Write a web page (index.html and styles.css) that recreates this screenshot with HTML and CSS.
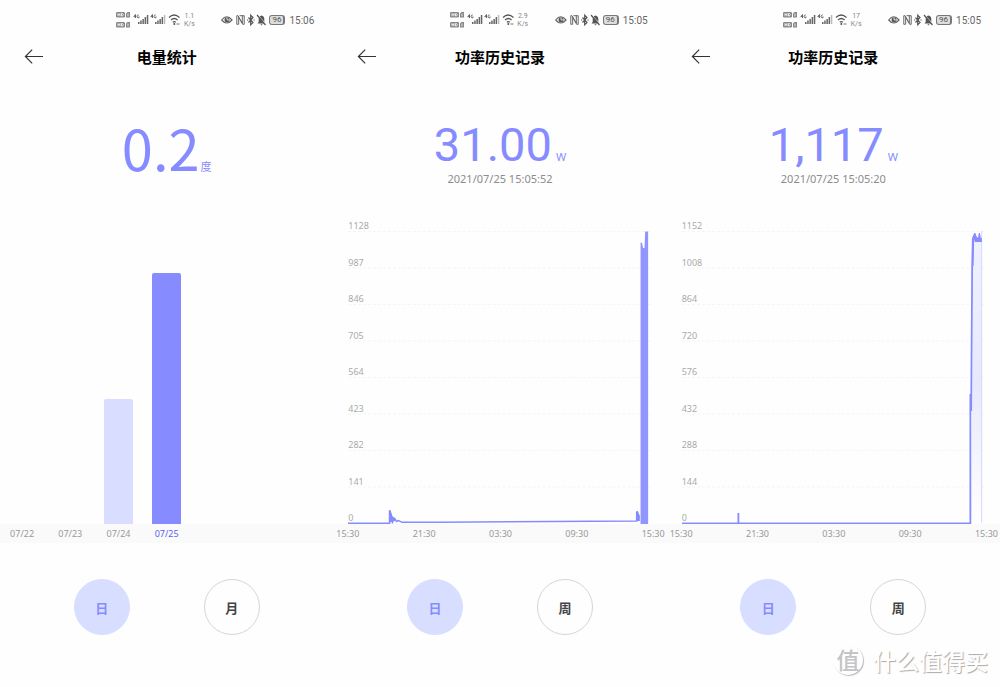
FILE: index.html
```html
<!DOCTYPE html>
<html lang="zh-CN">
<head>
<meta charset="utf-8">
<meta name="viewport" content="width=device-width, initial-scale=1">
<title>电量统计</title>
<link rel="stylesheet" href="styles.css">
</head>
<body>
<svg class="sprite" aria-hidden="true">
  <symbol id="network" viewBox="0 0 65 18">
    <g fill="#888">
      <rect x="0" y="1" width="9" height="5.500" rx="1.200"/><rect x="0" y="11" width="9" height="5.500" rx="1.200"/>
      <path d="M10 2.500L11.500 1H14v5.500h-4zM10 12.500l1.500-1.500H14v5.500h-4z"/>
    </g>
    <path d="M2 2.200v3M4 2.200v3M2 3.700h2M5.500 2.500h1l.8 1.200-.8 1.300h-1zM12 2.500v2.800M2 12.200v3M4 12.200v3M2 13.700h2M5.500 12.500h1l.8 1.200-.8 1.300h-1zM12 12.500v2.800" fill="none" stroke="#fff" stroke-width=".8"/>
    <g fill="none" stroke="#666" stroke-width="1">
      <path d="M19.500 7V3.500L17.800 5.700h2.300M22.800 4.200c-1.600-1.400-2.600 2.600-.6 2.600h.8V5.500M36.500 7V3.500L34.800 5.700h2.300M39.800 4.200c-1.600-1.400-2.600 2.600-.6 2.600h.8V5.500"/>
    </g>
    <path d="M22 11h1.500v2H22zM24.200 9.500h1.500V13h-1.500zM26.400 8h1.500v5h-1.500zM28.600 6h1.500v7h-1.500zM30.800 4h1.500v9h-1.500zM39 11h1.500v2H39zM41.200 9.500h1.500V13h-1.500zM43.400 8h1.500v5h-1.500zM45.600 6h1.500v7h-1.500z" fill="#666"/>
    <path d="M47.800 4h1.500v9h-1.500z" fill="#bbb"/>
    <g fill="none" stroke="#555" stroke-width="1.200"><path d="M53 6.500q5-5 10.500 0M55 9q3.300-3 6.600 0M56.800 11.300q1.500-1.300 3 0"/></g>
    <circle cx="58.300" cy="13" r="1" fill="#555"/><path d="M60.500 13h3" stroke="#777"/>
  </symbol>
  <symbol id="modes" viewBox="0 0 45 14">
    <path d="M.7 7q5-6.500 10.300 0-5.300 6-10.300 0z" fill="none" stroke="#666" stroke-width="1.200"/>
    <circle cx="6" cy="6.800" r="2.500" fill="#555"/><path d="M6 4.500v2.400h2" stroke="#fff" stroke-width=".8" fill="none"/>
    <path d="M17.500 11.300h-1.700V2.700h1.200l4.300 7.600V2.700M18.500 2.700h4.700v8.600h-1.500l-4-7v7" fill="none" stroke="#666" stroke-width="1"/>
    <path d="M27.500 4.500l4.500 5-2.300 2.300V2.200L32 4.500l-4.500 5M26 7h1.200M32.500 7h1.200" fill="none" stroke="#555" stroke-width="1.200"/>
    <path d="M36.500 10.500l1.200-1.500V6q0-3 2.800-3.500Q43.300 3 43.300 6v3l1.200 1.500zM39.300 11.300h2.400l-1.200 1.200z" fill="#555"/>
    <path d="M36.800 2l8 9" stroke="#fefefe" stroke-width="1"/><path d="M36 2l8.500 10" stroke="#555" stroke-width="1.200"/>
  </symbol>
  <symbol id="arrow" viewBox="0 0 20 16"><path d="M19 7.500H1.500M8.200.7L1.400 7.500l6.800 6.800" fill="none" stroke="#333" stroke-width="1.200"/></symbol>
  <symbol id="gridlines" viewBox="0 0 305 293" preserveAspectRatio="none">
    <path d="M0 .5h305M0 37h305M0 73.500h305M0 110h305M0 146.500h305M0 183h305M0 219.500h305M0 256h305" fill="none" stroke="#f5f5f7" stroke-dasharray="3 2"/>
  </symbol>
</svg>

<main class="screens">
  <section class="screen">
    <div class="status">
      <svg class="network"><use href="#network"/></svg>
      <span class="speed">1.1<br>K/s</span>
      <svg class="modes"><use href="#modes"/></svg>
      <span class="battery">96</span>
      <time class="clock">15:06</time>
    </div>
    <header class="bar">
      <button class="back" aria-label="返回"><svg><use href="#arrow"/></svg></button>
      <h1 class="title">电量统计</h1>
    </header>
    <div class="reading">
      <p class="value value-large">0.2<span class="unit">度</span></p>
    </div>
    <div class="chart bars">
      <div class="column"></div>
      <div class="column"></div>
      <div class="column"><div class="fill" style="height: 41.3%"></div></div>
      <div class="column"><div class="fill fill-active" style="height: 82.7%"></div></div>
    </div>
    <div class="axis days">
      <span>07/22</span><span>07/23</span><span>07/24</span><span class="current">07/25</span>
    </div>
    <nav class="range">
      <button class="pill pill-on">日</button>
      <button class="pill">月</button>
    </nav>
  </section>

  <section class="screen">
    <div class="status">
      <svg class="network"><use href="#network"/></svg>
      <span class="speed">2.9<br>K/s</span>
      <svg class="modes"><use href="#modes"/></svg>
      <span class="battery">96</span>
      <time class="clock">15:05</time>
    </div>
    <header class="bar">
      <button class="back" aria-label="返回"><svg><use href="#arrow"/></svg></button>
      <h1 class="title">功率历史记录</h1>
    </header>
    <div class="reading">
      <p class="value">31.00<span class="unit">W</span></p>
      <p class="stamp">2021/07/25 15:05:52</p>
    </div>
    <div class="chart line">
      <svg class="plot" viewBox="0 0 305 293" preserveAspectRatio="none">
        <use href="#gridlines"/>
        <path d="M0 292.300H41.700V280l1.500 4v7l1.500-5v5l2-3.500 2 3 2-1 3.500 1.800H90L289.300 290V281l1.500 5 1.500-1" fill="none" stroke="#868cff" stroke-width="1.500"/>
        <path d="M289 280h1.500l2 5v5H289zM41 279h1.500l2 6 2.500 3v2h-3.500l-2.500 2z" fill="#868cff"/>
        <path d="M293.200 292V11.700h1.500l1 5.300h1.500l.6-16.500h3V293h-7.600z" fill="#9095ff"/>
      </svg>
      <ol class="scale"><li>1128</li><li>987</li><li>846</li><li>705</li><li>564</li><li>423</li><li>282</li><li>141</li><li>0</li></ol>
    </div>
    <div class="axis hours">
      <span>15:30</span><span>21:30</span><span>03:30</span><span>09:30</span><span>15:30</span>
    </div>
    <nav class="range">
      <button class="pill pill-on">日</button>
      <button class="pill">周</button>
    </nav>
  </section>

  <section class="screen">
    <div class="status">
      <svg class="network"><use href="#network"/></svg>
      <span class="speed">17<br>K/s</span>
      <svg class="modes"><use href="#modes"/></svg>
      <span class="battery">96</span>
      <time class="clock">15:05</time>
    </div>
    <header class="bar">
      <button class="back" aria-label="返回"><svg><use href="#arrow"/></svg></button>
      <h1 class="title">功率历史记录</h1>
    </header>
    <div class="reading">
      <p class="value">1,117<span class="unit">W</span></p>
      <p class="stamp">2021/07/25 15:05:20</p>
    </div>
    <div class="chart line">
      <svg class="plot" viewBox="0 0 305 293" preserveAspectRatio="none">
        <defs>
          <linearGradient id="fade" x1="0" y1="0" x2="0" y2="1">
            <stop offset="0" stop-color="#f0f1ff"/><stop offset=".5" stop-color="#e8e8fb"/><stop offset="1" stop-color="#fff"/>
          </linearGradient>
        </defs>
        <use href="#gridlines"/>
        <path d="M290 292l2-284h8v284z" fill="url(#fade)"/>
        <path d="M300.300 0v292" stroke="#d4d7ff" stroke-width="1"/>
        <path d="M0 292.300H56.500V282V292.300H289V163l.8 17 1-145 .7-28" fill="none" stroke="#868cff" stroke-width="1.800"/>
        <path d="M290.700 35l.3-29 2-4h1l1 3 1.500 2 1-5h1l1 5h1v4h-7l-.7-3-.6 27z" fill="#868cff"/>
      </svg>
      <ol class="scale"><li>1152</li><li>1008</li><li>864</li><li>720</li><li>576</li><li>432</li><li>288</li><li>144</li><li>0</li></ol>
    </div>
    <div class="axis hours">
      <span>15:30</span><span>21:30</span><span>03:30</span><span>09:30</span><span>15:30</span>
    </div>
    <nav class="range">
      <button class="pill pill-on">日</button>
      <button class="pill">周</button>
    </nav>
  </section>
</main>

<div class="watermark"><span class="seal">值</span><span class="brand">什么值得买</span></div>
</body>
</html>
```

FILE: styles.css
```css
* { box-sizing: border-box; }

body {
  position: relative;
  margin: 0;
  min-height: 100vh;
  background: #fefefe;
  color: #999;
  font-family: "Noto Sans", "Noto Sans CJK SC", sans-serif;
}

h1, p, ol { margin: 0; padding: 0; }
button { padding: 0; border: 0; background: none; font: inherit; }

.sprite { position: absolute; width: 0; height: 0; }

.screens {
  display: grid;
  grid-template-columns: repeat(3, 1fr);
}

.screen { min-width: 0; }

.status {
  display: flex;
  align-items: center;
  justify-content: flex-end;
  height: 40px;
  padding-right: 19px;
}

.network { width: 65px; height: 18px; }
.modes { width: 45px; height: 14px; margin-left: 25px; }

.speed {
  width: 14px;
  margin-left: 1px;
  color: #888;
  font-family: Roboto, sans-serif;
  font-size: 7px;
  line-height: 8px;
  text-align: center;
}

.battery {
  width: 16px;
  height: 10px;
  margin-left: 3px;
  border: 1px solid #777;
  border-right-width: 2px;
  border-radius: 3px;
  background: #ddd;
  color: #555;
  font-family: Roboto, sans-serif;
  font-size: 8px;
  line-height: 8px;
  text-align: center;
}

.clock {
  margin-left: 4px;
  color: #666;
  font-family: Roboto, sans-serif;
  font-size: 10px;
}

.bar {
  display: grid;
  grid-template-columns: 44px 1fr 44px;
  align-items: center;
  height: 33px;
}

.back { display: flex; justify-content: flex-end; }
.back svg { width: 20px; height: 16px; }

.title {
  color: #000;
  font-family: "Noto Sans CJK SC", sans-serif;
  font-size: 15px;
  font-weight: 700;
  line-height: 20px;
  text-align: center;
}

.reading {
  height: 148px;
  padding-top: 48px;
  text-align: center;
}

.value {
  display: flex;
  align-items: baseline;
  justify-content: center;
  gap: 4px;
  color: #868cff;
  font-family: Roboto, sans-serif;
  font-size: 47px;
  line-height: 48px;
}

.value-large {
  gap: 1px;
  font-family: "Noto Sans CJK SC", sans-serif;
  font-size: 56px;
  line-height: 52px;
}

.unit {
  font-family: "Noto Sans", "Noto Sans CJK SC", sans-serif;
  font-size: 11px;
  line-height: 12px;
}

.stamp {
  margin-top: 3px;
  color: #8c8c8c;
  font-size: 11px;
  line-height: 14px;
}

.chart {
  display: grid;
  height: 303px;
}

.bars, .days {
  grid-template-columns: repeat(7, 1fr);
  margin: 0 -2px;
}

.column {
  display: flex;
  align-items: flex-end;
  justify-content: center;
}

.fill {
  width: 60%;
  border-radius: 2px 2px 0 0;
  background: #d9ddff;
}

.fill-active { background: #868cff; }

.line { margin: 0 14px 0 15px; }
.plot, .scale { grid-area: 1 / 1; }
.plot { align-self: end; width: 100%; height: 293px; }

.scale {
  display: flex;
  flex-direction: column;
  justify-content: space-between;
  padding-bottom: 1px;
  color: #aaa;
  font-size: 9px;
  line-height: 10px;
  list-style: none;
}

.axis {
  height: 19px;
  background: #fafafa;
  color: #999;
  font-size: 9px;
  line-height: 19px;
}

.days {
  display: grid;
  text-align: center;
}

.current { color: #5a5ff0; }

.hours {
  display: flex;
  justify-content: space-between;
  padding: 0 2px 0 3px;
}

.range {
  display: flex;
  justify-content: center;
  gap: 74px;
  padding-top: 36px;
}

.pill {
  width: 56px;
  height: 56px;
  border: 1px solid #d5d5d5;
  border-radius: 50%;
  color: #444;
  font-family: "Noto Sans CJK SC", sans-serif;
  font-size: 13px;
  font-weight: 700;
}

.pill-on {
  border-color: #d8deff;
  background: #d8deff;
  color: #868cff;
}

.watermark {
  position: absolute;
  right: 12px;
  bottom: 12px;
  display: flex;
  align-items: center;
  gap: 10px;
  font-family: "Noto Sans CJK SC", sans-serif;
  line-height: 30px;
}

.seal {
  width: 30px;
  height: 30px;
  border-radius: 50%;
  box-shadow: 1px 1px 1px #bbb;
  color: #c4c4c4;
  font-size: 23px;
  font-weight: 500;
  line-height: 28px;
  text-align: center;
}

.brand {
  color: #fff;
  font-size: 23px;
  font-weight: 500;
  text-shadow: 1px 1px 1px #aaa;
}
```
